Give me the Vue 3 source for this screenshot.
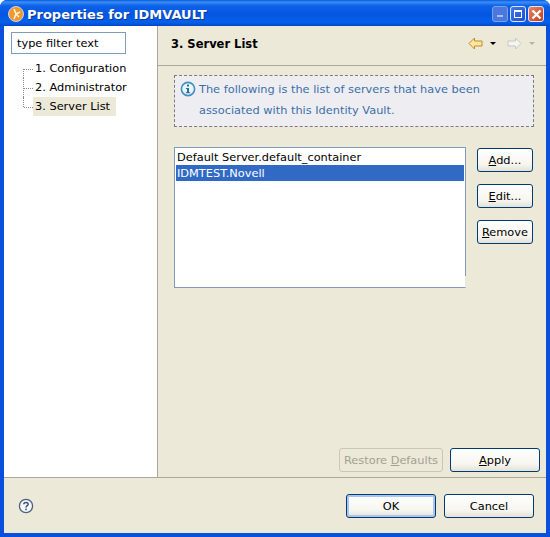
<script setup>
const treeItems = [
  { label: '1. Configuration', selected: false },
  { label: '2. Administrator', selected: false },
  { label: '3. Server List', selected: true }
]
</script>

<template>
  <div class="window">
    <div class="titlebar">
      <svg class="app-icon" width="16" height="16" viewBox="0 0 16 16">
        <circle cx="8" cy="8" r="7.5" fill="#ee9a2e" stroke="#c9d6ee" stroke-width="1" />
        <path d="M6 3 L8 8 L12 6 M8 8 L6 13 M8 8 L11 11" stroke="#fff3d8" stroke-width="1.6" fill="none" />
      </svg>
      <span class="title">Properties for IDMVAULT</span>
      <div class="controls">
        <div class="ctl ctl-min"><span class="min-bar"></span></div>
        <div class="ctl ctl-max"><span class="max-box"></span></div>
        <div class="ctl ctl-close">
          <svg width="11" height="11" viewBox="0 0 11 11">
            <path d="M1.5 1.5 L9.5 9.5 M9.5 1.5 L1.5 9.5" stroke="#fff" stroke-width="2.4" />
          </svg>
        </div>
      </div>
    </div>

    <div class="client">
      <div class="main">
        <aside class="sidebar">
          <div class="filter">type filter text</div>
          <ul class="tree">
            <li v-for="item in treeItems" :key="item.label" class="tree-row">
              <span class="tree-line"></span>
              <span :class="['tree-label', { selected: item.selected }]">{{ item.label }}</span>
            </li>
          </ul>
        </aside>

        <section class="page">
          <header class="page-head">
            <span class="page-title">3. Server List</span>
            <div class="nav">
              <svg width="15" height="13" viewBox="0 0 15 13">
                <path d="M6.5 1 L1 6.5 L6.5 12 V9 H14 V4 H6.5 Z" fill="#fbe6a8" stroke="#c98a1c" stroke-width="1" />
              </svg>
              <span class="caret"></span>
              <svg class="fwd" width="15" height="13" viewBox="0 0 15 13">
                <path d="M8.5 1 L14 6.5 L8.5 12 V9 H1 V4 H8.5 Z" fill="#f4f4f0" stroke="#c6c6c2" stroke-width="1" />
              </svg>
              <span class="caret caret-off"></span>
            </div>
          </header>

          <div class="page-body">
            <div class="info">
              <svg class="info-icon" width="16" height="16" viewBox="0 0 16 16">
                <circle cx="8" cy="8" r="6.6" fill="#eaf4fb" stroke="#3f8fc0" stroke-width="1.6" />
                <rect x="7" y="3.5" width="2" height="2" fill="#2b6f9e" />
                <path d="M6 7 H9 V11.2 H10.2 V12.2 H5.8 V11.2 H7 V8 H6 Z" fill="#2b6f9e" />
              </svg>
              <p>The following is the list of servers that have been associated with this Identity Vault.</p>
            </div>

            <div class="list-area">
              <div class="list">
                <div class="list-row">Default Server.default_container</div>
                <div class="list-row active">IDMTEST.Novell</div>
              </div>
              <div class="side-buttons">
                <button class="btn small"><u>A</u>dd...</button>
                <button class="btn small"><u>E</u>dit...</button>
                <button class="btn small"><u>R</u>emove</button>
              </div>
            </div>

            <div class="page-actions">
              <button class="btn restore" disabled>Restore <u>D</u>efaults</button>
              <button class="btn wide"><u>A</u>pply</button>
            </div>
          </div>
        </section>
      </div>

      <footer class="footer">
        <svg class="help" width="16" height="16" viewBox="0 0 16 16">
          <circle cx="8" cy="8" r="6.6" fill="#f6f8fb" stroke="#4d6185" stroke-width="1.3" />
          <path d="M5.8 6.2 C5.8 3.8 10.2 3.8 10.2 6.2 C10.2 7.8 8 7.6 8 9.6" fill="none" stroke="#3c5278" stroke-width="1.5" />
          <rect x="7.2" y="10.6" width="1.6" height="1.6" fill="#3c5278" />
        </svg>
        <div class="footer-buttons">
          <button class="btn wide default">OK</button>
          <button class="btn wide">Cancel</button>
        </div>
      </footer>
    </div>
  </div>
</template>

<style>
html, body {
  margin: 0;
  padding: 0;
}
</style>

<style scoped>
.window {
  width: 550px;
  height: 537px;
  box-sizing: border-box;
  display: flex;
  flex-direction: column;
  font-family: "DejaVu Sans", Verdana, sans-serif;
  font-size: 11.35px;
  color: #000;
  background: #0a50dc;
  border-radius: 7px 7px 0 0;
  overflow: hidden;
}

.titlebar {
  height: 26px;
  flex: none;
  display: flex;
  align-items: center;
  padding: 2px 6px 0 8px;
  box-sizing: border-box;
  background: linear-gradient(180deg, #0a58dc 0%, #3b8ff6 8%, #0d62e8 22%, #0456e0 55%, #0660ea 85%, #0049c8 100%);
}
.app-icon {
  flex: none;
}
.title {
  margin-left: 3px;
  color: #fff;
  font-weight: 700;
  font-size: 13px;
  white-space: nowrap;
  text-shadow: 1px 1px 0 #0a3a9a;
}
.controls {
  margin-left: auto;
  display: flex;
  gap: 2px;
}
.ctl {
  width: 16px;
  height: 16px;
  border: 1px solid #dfe8fb;
  border-radius: 3px;
  box-sizing: border-box;
  display: flex;
  align-items: center;
  justify-content: center;
}
.ctl-min {
  background: #4a78dc;
  border-color: #7f9fe8;
}
.min-bar {
  width: 6px;
  height: 2px;
  margin-top: 4px;
  background: #a9bff0;
}
.ctl-max {
  background: linear-gradient(135deg, #3f78ea, #1d50d4);
}
.max-box {
  width: 8px;
  height: 8px;
  box-sizing: border-box;
  border: 1px solid #fff;
  border-top-width: 2px;
}
.ctl-close {
  background: linear-gradient(135deg, #e8866a, #c93a18);
}

.client {
  flex: 1;
  min-height: 0;
  margin: 0 4px 4px;
  display: flex;
  flex-direction: column;
  background: #ece9d8;
}
.main {
  height: 451px;
  flex: none;
  display: flex;
  border-bottom: 1px solid #aca899;
  box-sizing: content-box;
}
.sidebar {
  width: 154px;
  flex: none;
  box-sizing: border-box;
  background: #fff;
  border-right: 1px solid #aca899;
  padding: 6px 0 0 7px;
}
.filter {
  width: 115px;
  height: 22px;
  box-sizing: border-box;
  border: 1px solid #7f9db9;
  padding-left: 5px;
  line-height: 20px;
  color: #000;
  background: #fff;
}
.tree {
  list-style: none;
  margin: 5px 0 0;
  padding: 0;
}
.tree-row {
  position: relative;
  height: 19px;
  padding-left: 22px;
  display: flex;
  align-items: center;
}
.tree-line {
  position: absolute;
  left: 12px;
  top: 0;
  bottom: 0;
  width: 10px;
  border-left: 1px dotted #8a8a8a;
}
.tree-line::after {
  content: '';
  position: absolute;
  left: 0;
  top: 10px;
  width: 9px;
  border-top: 1px dotted #8a8a8a;
}
.tree-row:first-child .tree-line {
  top: 10px;
}
.tree-row:last-child .tree-line {
  bottom: 9px;
}
.tree-row:first-child .tree-line::after {
  top: 0;
}
.tree-label {
  padding: 0 2px;
  height: 19px;
  line-height: 19px;
  white-space: nowrap;
}
.tree-label.selected {
  background: #ece9d8;
  padding-right: 6px;
}

.page {
  flex: 1;
  min-width: 0;
  display: flex;
  flex-direction: column;
}
.page-head {
  height: 40px;
  flex: none;
  box-sizing: border-box;
  display: flex;
  align-items: center;
  padding: 0 11px 4px 13px;
  border-bottom: 1px solid #aca899;
}
.page-title {
  font-weight: 700;
  font-size: 11.5px;
}
.nav {
  margin-left: auto;
  display: flex;
  align-items: center;
}
.caret {
  width: 0;
  height: 0;
  margin-left: 7px;
  border-left: 3px solid transparent;
  border-right: 3px solid transparent;
  border-top: 3px solid #000;
}
.caret-off {
  border-top-color: #b5b3a8;
}
.fwd {
  margin-left: 11px;
}
.page-body {
  flex: 1;
  min-height: 0;
  display: flex;
  flex-direction: column;
  padding: 9px 6px 5px 16px;
}
.info {
  width: 360px;
  height: 52px;
  box-sizing: border-box;
  display: flex;
  gap: 3px;
  padding: 5px 5px 0;
  background: #eeeef2;
  border: 1px dashed #7b7b7b;
}
.info-icon {
  flex: none;
}
.info p {
  margin: -2px 0 0;
  color: #3b6ea8;
  line-height: 21px;
}
.list-area {
  margin-top: 20px;
  display: flex;
  align-items: flex-start;
}
.list {
  position: relative;
  width: 292px;
  height: 141px;
  box-sizing: border-box;
  padding: 1px 1px;
  background: #fff;
  background-clip: padding-box;
  border: 1px solid #7f9db9;
  border-right-color: transparent;
}
.list::after {
  content: '';
  position: absolute;
  top: -1px;
  right: -1px;
  width: 1px;
  height: 129px;
  background: #7f9db9;
}
.list-row {
  height: 16px;
  line-height: 16px;
  padding-left: 1px;
  white-space: nowrap;
}
.list-row.active {
  background: #316ac5;
  color: #fff;
}
.side-buttons {
  margin: 1px 0 0 11px;
  display: flex;
  flex-direction: column;
  gap: 12px;
}
.btn {
  height: 24px;
  box-sizing: border-box;
  padding: 0;
  font: inherit;
  color: #000;
  border: 1px solid #003c74;
  border-radius: 3px;
  background: linear-gradient(180deg, #fff 0%, #f6f5ef 70%, #e4e1d4 100%);
}
.btn.small {
  width: 56px;
}
.btn.wide {
  width: 90px;
}
.btn.restore {
  width: 104px;
  color: #a3a194;
  background: #ece9d8;
  border-color: #c9c7ba;
}
.btn.default {
  border-color: #003c74;
  box-shadow: inset 0 0 0 2px #a9c4ee;
}
.page-actions {
  margin-top: auto;
  display: flex;
  justify-content: flex-end;
  gap: 7px;
}
.footer {
  flex: 1;
  display: flex;
  align-items: center;
  padding: 0 12px 0 14px;
}
.help {
  flex: none;
}
.footer-buttons {
  margin-left: auto;
  display: flex;
  gap: 8px;
}
</style>
